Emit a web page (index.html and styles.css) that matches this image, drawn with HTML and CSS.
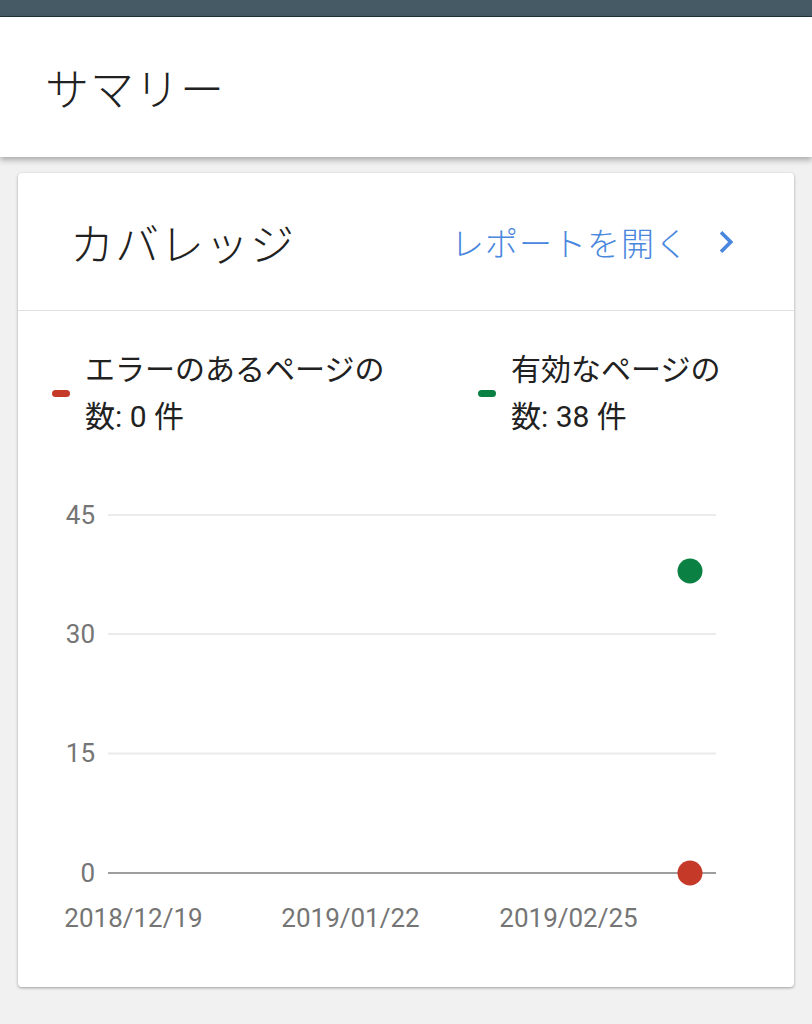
FILE: index.html
```html
<!DOCTYPE html>
<html lang="ja">
<head>
    <meta charset="UTF-8">
    <meta name="viewport" content="width=device-width, initial-scale=1.0">
    <title>サマリー</title>
    <link rel="stylesheet" href="styles.css">
</head>
<body>
    <div class="topbar"></div>

    <header class="page-header">
        <h1 class="page-title">サマリー</h1>
    </header>

    <main class="content">
        <section class="card">
            <div class="card-head">
                <h2 class="card-title">カバレッジ</h2>
                <a class="report-link" href="#">
                    レポートを開く
                    <svg class="chevron" width="44" height="44" viewBox="0 0 24 24">
                        <path d="M10 6L8.59 7.41 13.17 12l-4.58 4.59L10 18l6-6z"></path>
                    </svg>
                </a>
            </div>

            <div class="legend">
                <div class="legend-item">
                    <span class="swatch swatch-error"></span>
                    <span class="legend-text">エラーのあるページの<br>数: 0 件</span>
                </div>
                <div class="legend-item">
                    <span class="swatch swatch-valid"></span>
                    <span class="legend-text">有効なページの<br>数: 38 件</span>
                </div>
            </div>

            <svg class="chart" width="776" height="500" viewBox="0 0 776 500">
                <g class="grid">
                    <line x1="90" y1="55" x2="698" y2="55"></line>
                    <line x1="90" y1="174" x2="698" y2="174"></line>
                    <line x1="90" y1="293.5" x2="698" y2="293.5"></line>
                </g>
                <line class="axis" x1="90" y1="413" x2="698" y2="413"></line>

                <g class="y-labels">
                    <text x="77" y="64">45</text>
                    <text x="77" y="183">30</text>
                    <text x="77" y="302">15</text>
                    <text x="77" y="422">0</text>
                </g>
                <g class="x-labels">
                    <text x="115.5" y="467">2018/12/19</text>
                    <text x="332.5" y="467">2019/01/22</text>
                    <text x="550.5" y="467">2019/02/25</text>
                </g>

                <circle class="dot-valid" cx="672" cy="111" r="12.5"></circle>
                <circle class="dot-error" cx="672" cy="413" r="12.5"></circle>
            </svg>
        </section>
    </main>
</body>
</html>
```

FILE: styles.css
```css
body, html {
    margin: 0;
    padding: 0;
}
body {
    background-color: #f1f1f1;
    font-family: Roboto, "Noto Sans CJK JP", sans-serif;
    color: #212121;
}
.topbar {
    height: 16px;
    background-color: #465a66;
    border-bottom: 1px solid #22323c;
}
.page-header {
    height: 140px;
    background-color: #fff;
    display: flex;
    align-items: center;
    padding-left: 45px;
    box-shadow: 0 3px 6px rgba(0, 0, 0, 0.3);
    position: relative;
}
.page-title {
    margin: 0;
    font-size: 44px;
    font-weight: 300;
    letter-spacing: 1px;
}
.content {
    padding: 16px 18px 40px;
}
.card {
    background-color: #fff;
    border-radius: 4px;
    box-shadow: 0 1px 3px rgba(0, 0, 0, 0.35);
    padding-bottom: 27px;
}
.card-head {
    height: 137px;
    display: flex;
    align-items: center;
    justify-content: space-between;
    padding: 0 46px 0 52px;
    border-bottom: 1px solid #e0e0e0;
}
.card-title {
    margin: 0;
    font-size: 44px;
    font-weight: 300;
    letter-spacing: 1px;
}
.report-link {
    display: flex;
    align-items: center;
    color: #4a87de;
    text-decoration: none;
    font-size: 33px;
    font-weight: 300;
    letter-spacing: 1px;
    gap: 15px;
}
.chevron {
    fill: #4a87de;
    display: block;
}
.legend {
    display: flex;
    padding: 35px 0 0 34px;
}
.legend-item {
    display: flex;
    align-items: center;
    gap: 15px;
    width: 426px;
    flex-shrink: 0;
}
.legend-item + .legend-item {
    width: auto;
    flex-shrink: 1;
}
.legend-text {
    font-size: 30px;
    line-height: 47px;
    color: #212121;
}
.swatch {
    width: 18px;
    height: 7px;
    border-radius: 4px;
    flex-shrink: 0;
}
.swatch-error {
    background-color: #c53929;
}
.swatch-valid {
    background-color: #0b8043;
}
.chart {
    display: block;
    margin-top: 20px;
}
.grid line {
    stroke: #ebebeb;
    stroke-width: 2;
}
.axis {
    stroke: #9e9e9e;
    stroke-width: 2;
}
.chart text {
    font-family: Roboto, sans-serif;
    font-size: 26px;
    fill: #757575;
}
.y-labels text {
    text-anchor: end;
}
.x-labels text {
    text-anchor: middle;
}
.dot-valid {
    fill: #0b8043;
}
.dot-error {
    fill: #c53929;
}
```
